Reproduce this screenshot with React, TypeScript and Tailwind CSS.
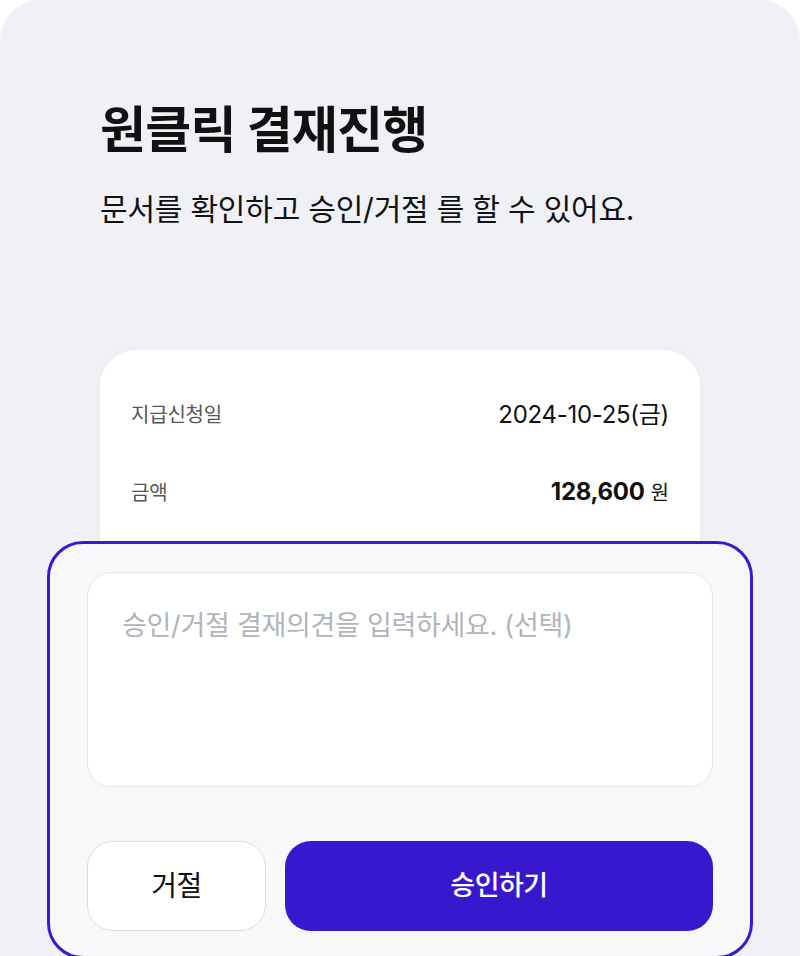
import React from "react";

const font = { fontFamily: 'Inter, "Noto Sans CJK KR", sans-serif' };

export default function App() {
  return (
    <div className="relative h-[956px] w-[800px] overflow-hidden bg-white" style={font}>
      <div className="flex h-full flex-col rounded-t-[40px] bg-[#f0f1f7] px-[100px] pt-[98px]">
        <h1 className="text-[50px] font-bold leading-[64px] tracking-[-0.8px] text-[#111]">원클릭 결재진행</h1>
        <p className="mt-[27px] text-[30px] leading-[40px] tracking-[-0.2px] text-[#111]">
          문서를 확인하고 승인/거절 를 할 수 있어요.
        </p>
        <div className="mt-[121px] flex h-[300px] flex-col gap-[41px] rounded-[36px] bg-white px-[31px] pt-[47px] shadow-[0_0_12px_rgba(0,0,0,0.03)]">
          <div className="flex items-center justify-between leading-[36px]">
            <span className="text-[20px] tracking-[-0.2px] text-[#555]">지급신청일</span>
            <span className="text-[24px] tracking-[-0.3px] text-[#111]">2024-10-25(금)</span>
          </div>
          <div className="flex items-center justify-between leading-[36px]">
            <span className="text-[20px] tracking-[-0.2px] text-[#555]">금액</span>
            <span className="flex items-baseline gap-[6px] text-[#111]">
              <span className="text-[24px] font-bold tracking-[-0.3px]">128,600</span>
              <span className="text-[20px]">원</span>
            </span>
          </div>
        </div>
      </div>

      <div className="absolute left-[47px] right-[47px] top-[541px] h-[418px] rounded-[36px] border-[3px] border-[#3a1ad0] bg-[#f7f8fa] px-[37px] pt-[28px]">
        <div className="h-[215px] rounded-[24px] border border-[#e6e7ea] bg-white px-[34px] pt-[36px]">
          <span className="text-[27px] leading-[34px] tracking-[-0.3px] text-[#b1b4ba]">
            승인/거절 결재의견을 입력하세요. (선택)
          </span>
        </div>
        <div className="mt-[54px] flex gap-[19px]">
          <button className="h-[90px] w-[179px] rounded-[26px] border border-[#dcdde0] bg-white text-[28px] tracking-[-0.5px] text-[#111]">
            거절
          </button>
          <button className="h-[90px] flex-1 rounded-[26px] bg-[#3718cf] text-[27px] font-medium tracking-[-0.5px] text-white">
            승인하기
          </button>
        </div>
      </div>
    </div>
  );
}
